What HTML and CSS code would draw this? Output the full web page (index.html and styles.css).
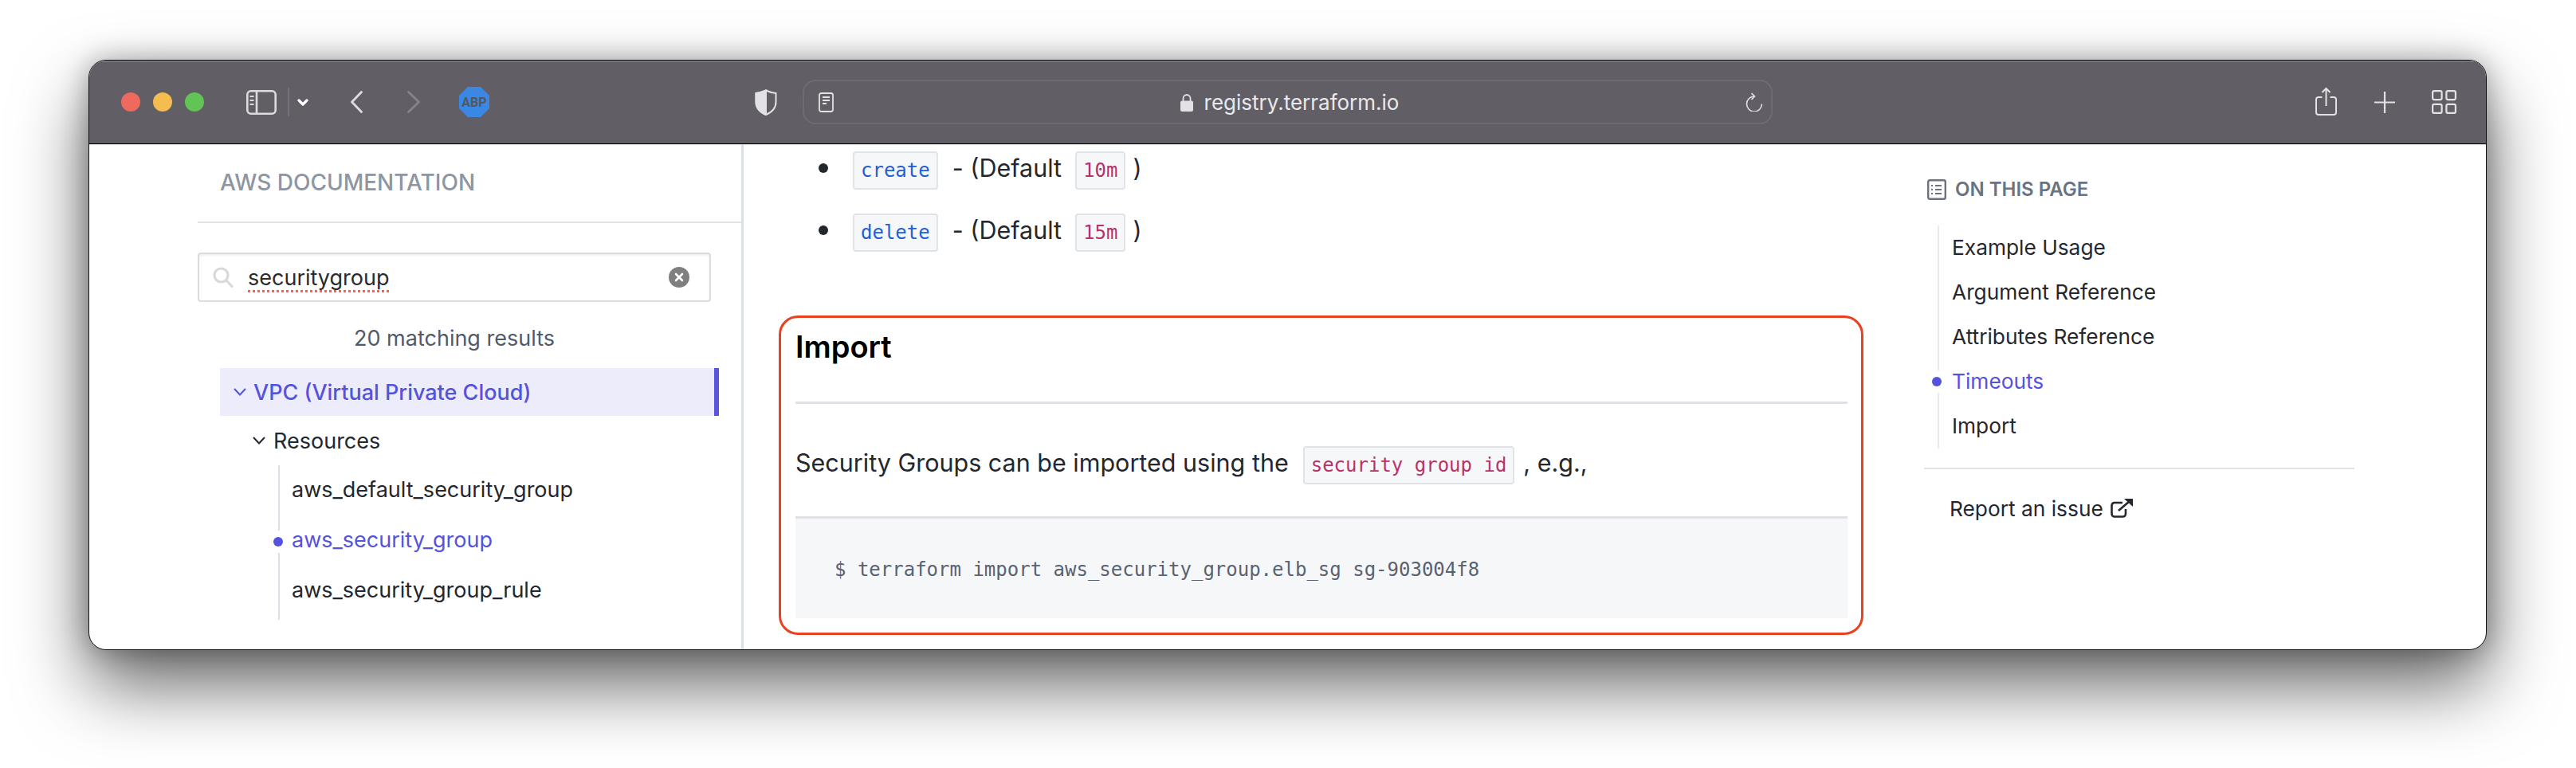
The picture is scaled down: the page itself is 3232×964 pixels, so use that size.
FILE: index.html
```html
<!DOCTYPE html>
<html>
  <head>
    <meta charset="utf-8">
    <title>aws_security_group - registry.terraform.io</title>
    <link rel="stylesheet" href="styles.css">
  </head>
  <body>
    <div class="fenetre">

      <div class="barre">
        <div class="feux">
          <span class="feu rouge"></span>
          <span class="feu jaune"></span>
          <span class="feu vert"></span>
        </div>

        <svg class="ic-side" width="38" height="31" viewBox="0 0 38 31" fill="none" stroke="#dcdbe0" stroke-width="2.6">
          <rect x="1.3" y="1.3" width="35.4" height="28.4" rx="4.5"/>
          <path d="M13 1.5V29.5"/>
          <path d="M4.5 8H9.5M4.5 13H9.5M4.5 18H9.5" stroke-width="2"/>
        </svg>
        <span class="sep"></span>
        <svg class="ic-down" width="14" height="9" viewBox="0 0 14 9" fill="none" stroke="#fff" stroke-width="3.2" stroke-linecap="round" stroke-linejoin="round">
          <path d="M2 2L7 7L12 2"/>
        </svg>
        <svg class="ic-back" width="15" height="28" viewBox="0 0 15 28" fill="none" stroke="#dcdbe0" stroke-width="2.8" stroke-linecap="round" stroke-linejoin="round">
          <path d="M13.5 1.5L1.5 14L13.5 26.5"/>
        </svg>
        <svg class="ic-next" width="16" height="28" viewBox="0 0 16 28" fill="none" stroke="#85848a" stroke-width="2.8" stroke-linecap="round" stroke-linejoin="round">
          <path d="M1.5 1.5L14.5 14L1.5 26.5"/>
        </svg>
        <svg class="ic-abp" width="38" height="38" viewBox="0 0 38 38">
          <polygon points="11,0 27,0 38,11 38,27 27,38 11,38 0,27 0,11" fill="#3a88e4"/>
          <text x="19" y="25" text-anchor="middle" class="abp-txt">ABP</text>
        </svg>
        <svg class="ic-shield" width="28" height="33" viewBox="0 0 28 33" fill="none" stroke="#e2e1e6" stroke-width="2">
          <path d="M14 1.5C10 3.5 5.5 4.5 1.5 5V16C1.5 24 7 29 14 32C21 29 26.5 24 26.5 16V5C22.5 4.5 18 3.5 14 1.5Z"/>
          <path d="M14 1.5C10 3.5 5.5 4.5 1.5 5V16C1.5 24 7 29 14 32Z" fill="#e2e1e6"/>
        </svg>

        <div class="url">
          <svg width="19" height="25" viewBox="0 0 19 25" fill="none" stroke="#e2e1e6" stroke-width="1.8">
            <rect x="1" y="1" width="17" height="23" rx="2.5"/>
            <path d="M5 6H14M5 10H14M5 14H10"/>
          </svg>
          <div class="url-site">
            <svg width="16" height="23" viewBox="0 0 16 23" fill="#e2e1e6">
              <path d="M3.5 10V6.5A4.5 4.5 0 0 1 12.5 6.5V10" fill="none" stroke="#e2e1e6" stroke-width="1.8"/>
              <rect x="0" y="9.5" width="16" height="13.5" rx="2"/>
            </svg>
            <span>registry.terraform.io</span>
          </div>
          <svg width="22" height="24" viewBox="0 0 22 24" fill="none" stroke="#e2e1e6" stroke-width="1.6">
            <path d="M11 5A9.5 9.5 0 1 0 20.5 14.5"/>
            <path d="M7.5 1L11.5 5L7.5 9"/>
          </svg>
        </div>

        <svg class="ic-share" width="27" height="36" viewBox="0 0 27 36" fill="none" stroke="#e2e1e6" stroke-width="2">
          <path d="M8.5 13H4A3 3 0 0 0 1 16V32A3 3 0 0 0 4 35H23A3 3 0 0 0 26 32V16A3 3 0 0 0 23 13H18.5"/>
          <path d="M13.5 2V24M8.5 7L13.5 2L18.5 7"/>
        </svg>
        <svg class="ic-plus" width="26" height="27" viewBox="0 0 26 27" fill="none" stroke="#e2e1e6" stroke-width="2.2">
          <path d="M13 0V27M0 13.5H26"/>
        </svg>
        <svg class="ic-grid" width="31" height="30" viewBox="0 0 31 30" fill="none" stroke="#e2e1e6" stroke-width="2.2">
          <rect x="1.1" y="1.1" width="11.5" height="11" rx="2"/>
          <rect x="18.4" y="1.1" width="11.5" height="11" rx="2"/>
          <rect x="1.1" y="17.9" width="11.5" height="11" rx="2"/>
          <rect x="18.4" y="17.9" width="11.5" height="11" rx="2"/>
        </svg>
      </div>

      <div class="page">

        <div class="nav">
          <div class="nav-titre">AWS DOCUMENTATION</div>

          <div class="recherche">
            <svg width="26" height="26" viewBox="0 0 26 26" fill="none" stroke="#d9d9d9" stroke-width="3.2">
              <circle cx="10.5" cy="10.5" r="8.5"/>
              <path d="M17 17L24 24.5" stroke-linecap="round"/>
            </svg>
            <span class="recherche-txt">securitygroup</span>
            <svg width="26" height="26" viewBox="0 0 26 26">
              <circle cx="13" cy="13" r="13" fill="#7f7f7f"/>
              <path d="M9 9L17 17M17 9L9 17" stroke="#fff" stroke-width="2.6" stroke-linecap="round"/>
            </svg>
          </div>

          <div class="resultats">20 matching results</div>

          <div class="groupe">
            <svg width="16" height="10" viewBox="0 0 16 10" fill="none" stroke="#5552dd" stroke-width="2">
              <path d="M1 1L8 8.5L15 1"/>
            </svg>
            <span>VPC (Virtual Private Cloud)</span>
          </div>

          <div class="sous-groupe">
            <svg width="16" height="10" viewBox="0 0 16 10" fill="none" stroke="#24272e" stroke-width="2">
              <path d="M1 1L8 8.5L15 1"/>
            </svg>
            <span>Resources</span>
          </div>

          <ul class="arbre">
            <li>aws_default_security_group</li>
            <li class="actif">aws_security_group</li>
            <li>aws_security_group_rule</li>
          </ul>
        </div>

        <div class="contenu">
          <div class="ligne">
            <span class="puce"></span>
            <code class="bleu">create</code>
            <span class="apres">- (Default</span>
            <code class="rose defaut">10m</code>
            <span class="fin">)</span>
          </div>
          <div class="ligne">
            <span class="puce"></span>
            <code class="bleu">delete</code>
            <span class="apres">- (Default</span>
            <code class="rose defaut">15m</code>
            <span class="fin">)</span>
          </div>

          <div class="encadre">
            <h2>Import</h2>
            <p>
              <span>Security Groups can be imported using the</span>
              <code class="rose id">security group id</code>
              <span class="virgule">, e.g.,</span>
            </p>
            <pre>$ terraform import aws_security_group.elb_sg sg-903004f8</pre>
          </div>
        </div>

        <div class="sommaire">
          <div class="sommaire-titre">
            <svg width="24" height="26" viewBox="0 0 24 26" fill="none" stroke="#6b7382" stroke-width="2.4">
              <rect x="1.2" y="1.2" width="21.6" height="23.6" rx="2"/>
              <path d="M10 8H18M10 13H18M10 18H18" stroke-width="2"/>
              <path d="M5 8H7M5 13H7M5 18H7" stroke-width="2"/>
            </svg>
            <span>ON THIS PAGE</span>
          </div>
          <ul class="toc">
            <li>Example Usage</li>
            <li>Argument Reference</li>
            <li>Attributes Reference</li>
            <li class="actif">Timeouts</li>
            <li>Import</li>
          </ul>
          <div class="rapport">
            <span>Report an issue</span>
            <svg width="28" height="24" viewBox="0 0 28 24" fill="none" stroke="#24272e" stroke-width="2.6">
              <path d="M15 5H5A3.5 3.5 0 0 0 1.5 8.5V19A3.5 3.5 0 0 0 5 22.5H15.5A3.5 3.5 0 0 0 19 19V13"/>
              <path d="M10 15L24 3"/>
              <path d="M17 0H28V10Z" fill="#24272e" stroke="none"/>
            </svg>
          </div>
        </div>

      </div>
    </div>
  </body>
</html>
```

FILE: styles.css
```css
html, body, div, ul, li, p, h2, pre, code{
  margin:0px;
  padding:0px;
}
html, body{
  height:100%;
  background-color:#fff;
  overflow:hidden;
}
body{
  padding:75px 0px 0px 111px;
  box-sizing:border-box;
  font-family:"Inter", "Liberation Sans", sans-serif;
  color:#24272e;
}
ul{
  list-style:none;
}
svg{
  display:block;
  flex:none;
}

.fenetre{
  width:3009px;
  height:741px;
  box-sizing:border-box;
  border:1px solid #111;
  border-radius:22px;
  background-color:#fff;
  box-shadow:0px 0px 34px rgba(0,0,0,0.3), 0px 44px 90px rgba(0,0,0,0.6);
  overflow:hidden;
}

/* barre du navigateur */
.barre{
  height:105px;
  box-sizing:border-box;
  display:flex;
  align-items:center;
  padding-left:40px;
  background-color:#615f65;
  border-bottom:1px solid #000;
  box-shadow:inset 0px 2px 0px #767479;
}
.feux{
  display:flex;
  gap:16px;
}
.feu{
  width:24px;
  height:24px;
  border-radius:50%;
}
.rouge{ background-color:#ee6a5f; }
.jaune{ background-color:#f5bd4f; }
.vert{ background-color:#61c454; }

.ic-side{ margin-left:53px; }
.sep{
  width:2px;
  height:36px;
  margin-left:14px;
  background-color:#757378;
}
.ic-down{ margin-left:10px; }
.ic-back{ margin-left:53px; }
.ic-next{ margin-left:56px; }
.ic-abp{ margin-left:49px; }
.abp-txt{
  font-family:"Roboto", sans-serif;
  font-weight:bold;
  font-size:16px;
  fill:#55565e;
}
.ic-shield{ margin-left:333px; }
.ic-share{ margin-left:681px; margin-top:-3px; }
.ic-plus{ margin-left:47px; }
.ic-grid{ margin-left:46px; }

.url{
  width:1217px;
  height:56px;
  margin-left:32px;
  box-sizing:border-box;
  display:flex;
  align-items:center;
  justify-content:space-between;
  padding:0px 10px 0px 18px;
  border:2px solid #6e6c72;
  border-radius:16px;
}
.url-site{
  display:flex;
  align-items:center;
  gap:14px;
  font-size:26px;
  color:#e9e9ec;
}

/* les trois colonnes */
.page{
  height:635px;
  display:grid;
  grid-template-columns:821px 1481px 1fr;
  box-shadow:inset 0px 1px 0px #ddd;
  overflow:hidden;
}

/* colonne de gauche */
.nav{
  padding-left:136px;
  border-right:3px solid #dbe0e6;
  font-size:27px;
}
.nav-titre{
  width:654px;
  height:97px;
  line-height:96px;
  padding-left:28px;
  border-bottom:2px solid #dfe3e8;
  font-size:28px;
  font-weight:500;
  color:#8e95a3;
}
.recherche{
  width:644px;
  height:62px;
  margin-top:37px;
  box-sizing:border-box;
  display:flex;
  align-items:center;
  padding:0px 25px 0px 17px;
  border:2px solid #dcdcdc;
  border-radius:4px;
  box-shadow:inset 0px 2px 3px #eee;
}
.recherche-txt{
  flex:1;
  margin-left:18px;
  color:#2b2b2b;
  text-decoration:underline dotted #f0645a 3px;
  text-underline-offset:6px;
  text-decoration-skip-ink:none;
}
.resultats{
  width:644px;
  height:40px;
  line-height:44px;
  margin-top:24px;
  text-align:center;
  color:#525a66;
}
.groupe{
  width:626px;
  height:60px;
  margin:19px 0px 0px 28px;
  box-sizing:border-box;
  display:flex;
  align-items:center;
  gap:9px;
  padding-left:17px;
  background-color:#edecfa;
  border-right:6px solid #5856de;
  color:#5552dd;
  font-weight:500;
}
.sous-groupe{
  height:60px;
  box-sizing:border-box;
  margin-left:69px;
  padding-top:2px;
  display:flex;
  align-items:center;
  gap:10px;
}
.arbre{
  position:relative;
  margin:2px 0px 0px 101px;
  padding:2px 0px 8px 15px;
  border-left:2px solid #dcdfe6;
  display:flex;
  flex-direction:column;
  gap:5px;
}
.arbre li{
  line-height:58px;
}
.actif{
  position:relative;
  color:#5552dd;
}
.actif::before{
  content:"";
  position:absolute;
  width:12px;
  height:12px;
  border-radius:50%;
  background-color:#5552dd;
  box-shadow:0px 0px 0px 8px #fff;
}
.arbre .actif::before{
  left:-23px;
  top:25px;
}

/* colonne du milieu */
.contenu{
  font-size:30.5px;
}
.ligne{
  display:flex;
  align-items:baseline;
  padding:9px 0px 0px 94px;
  margin-bottom:21px;
  line-height:1;
}
.puce{
  width:12px;
  height:12px;
  margin-right:31px;
  border-radius:50%;
  background-color:#24272e;
  align-self:flex-start;
  margin-top:15px;
}
code{
  display:inline-block;
  height:48px;
  line-height:44px;
  box-sizing:border-box;
  padding:0px 8px;
  background-color:#f6f7f9;
  border:2px solid #e0e3e8;
  border-radius:4px;
  font-family:"DejaVu Sans Mono", "Liberation Mono", monospace;
  font-size:24px;
}
.bleu{ color:#1f5fd6; }
.rose{ color:#b83268; }
.apres{ margin-left:18px; }
.defaut{ margin-left:17px; }
.fin{ margin-left:9px; }

.encadre{
  width:1361px;
  height:401px;
  margin:80px 0px 0px 44px;
  box-sizing:border-box;
  padding:0px 17px 0px 18px;
  border:3px solid #ea4122;
  border-radius:24px;
}
h2{
  height:73px;
  line-height:73px;
  padding-bottom:32px;
  border-bottom:3px solid #dfe1e6;
  font-size:38px;
  font-weight:600;
  color:#000;
}
.encadre p{
  display:flex;
  align-items:baseline;
  margin-top:53px;
  line-height:1;
}
.id{ margin-left:18px; }
.virgule{ margin-left:11px; }
pre{
  height:125px;
  line-height:128px;
  margin-top:40px;
  padding-left:49px;
  background-color:#f6f7f9;
  border-top:3px solid #dfe1e6;
  font-family:"DejaVu Sans Mono", "Liberation Mono", monospace;
  font-size:24px;
  color:#5a6270;
}

/* colonne de droite */
.sommaire{
  font-size:26.3px;
}
.sommaire-titre{
  display:flex;
  align-items:center;
  gap:11px;
  margin:42px 0px 0px 4px;
  font-size:24px;
  font-weight:600;
  color:#6b7382;
}
.toc{
  width:520px;
  margin:31px 0px 0px 17px;
  padding-left:16px;
  border-left:2px solid #e8eaef;
}
.toc li{
  line-height:56px;
}
.toc .actif::before{
  left:-25px;
  top:22px;
}
.rapport{
  width:508px;
  height:56px;
  margin-top:24px;
  padding:21px 0px 0px 32px;
  border-top:2px solid #dfe3e8;
  display:flex;
  align-items:center;
  gap:9px;
}
```
